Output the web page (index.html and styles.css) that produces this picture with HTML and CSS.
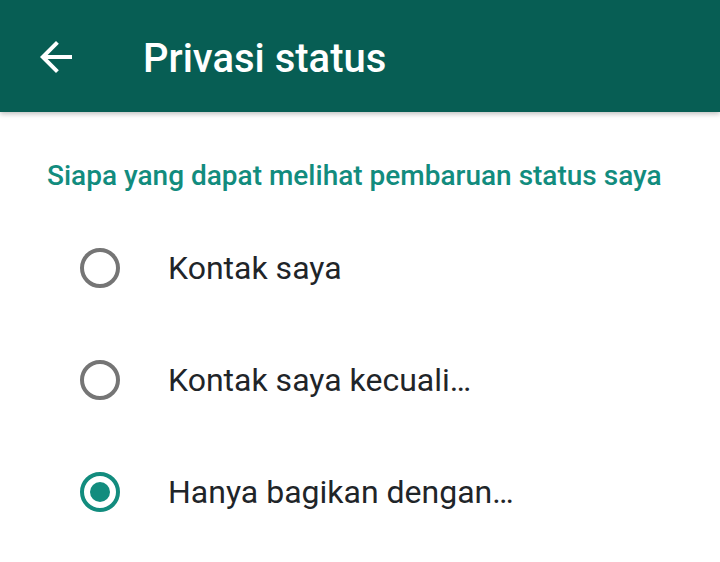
FILE: index.html
```html
<!DOCTYPE html>
<html lang="id">
<head>
    <meta charset="UTF-8">
    <meta name="viewport" content="width=device-width, initial-scale=1.0">
    <title>Privasi status</title>
    <link rel="stylesheet" href="styles.css">
</head>
<body>
    <header class="app-bar">
        <svg class="back-icon" viewBox="0 0 24 24" width="48" height="48">
            <path d="M20 11H7.83l5.59-5.59L12 4l-8 8 8 8 1.41-1.41L7.83 13H20v-2z" fill="#fff"/>
        </svg>
        <h1 class="app-title">Privasi status</h1>
    </header>

    <main class="content">
        <div class="section-title">Siapa yang dapat melihat pembaruan status saya</div>

        <div class="option-list">
            <label class="option-row">
                <span class="radio"></span>
                <span class="option-text">Kontak saya</span>
            </label>
            <label class="option-row">
                <span class="radio"></span>
                <span class="option-text">Kontak saya kecuali…</span>
            </label>
            <label class="option-row">
                <span class="radio checked"></span>
                <span class="option-text">Hanya bagikan dengan…</span>
            </label>
        </div>
    </main>
</body>
</html>
```

FILE: styles.css
```css
body {
    margin: 0;
    background: #fff;
    font-family: Roboto, "Noto Sans", sans-serif;
    width: 720px;
    height: 562px;
    overflow: hidden;
}
.app-bar {
    height: 112px;
    background-color: #075e54;
    display: flex;
    align-items: center;
    box-shadow: 0 2px 5px rgba(0, 0, 0, 0.25);
    position: relative;
}
.back-icon {
    margin-left: 32px;
    margin-right: 63px;
    margin-top: 2px;
}
.app-title {
    margin: 4px 0 0;
    color: #fff;
    font-size: 40px;
    font-weight: 500;
}
.content {
    padding-top: 47px;
}
.section-title {
    color: #128c7e;
    font-size: 28px;
    font-weight: 500;
    padding-left: 47px;
}
.option-list {
    padding-top: 20px;
}
.option-row {
    display: flex;
    align-items: center;
    height: 112px;
}
.radio {
    box-sizing: border-box;
    width: 40px;
    height: 40px;
    margin-left: 80px;
    margin-right: 48px;
    border: 4px solid #757575;
    border-radius: 50%;
    display: flex;
    align-items: center;
    justify-content: center;
}
.radio.checked {
    border-color: #128c7e;
}
.radio.checked::after {
    content: "";
    width: 20px;
    height: 20px;
    border-radius: 50%;
    background: #128c7e;
}
.option-text {
    color: #1f2529;
    font-size: 32px;
}
```
